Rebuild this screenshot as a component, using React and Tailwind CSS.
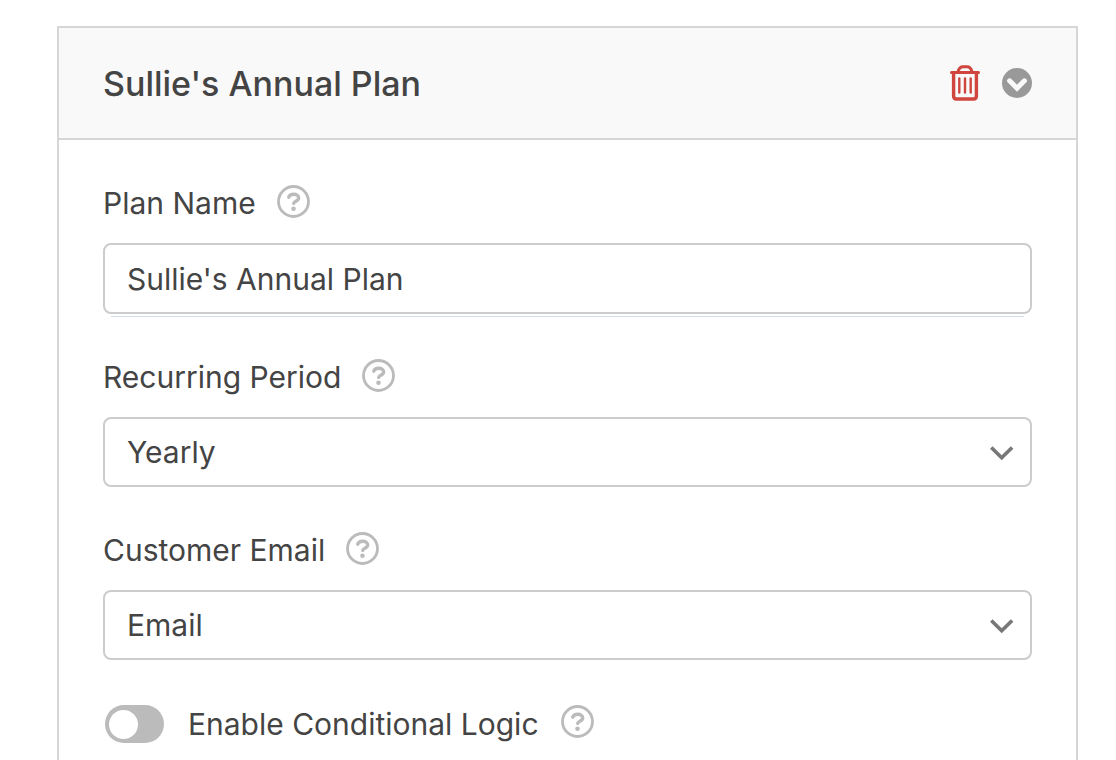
import React, { useState } from 'react';

const HelpTip = ({ label }) => (
  <button type="button" aria-label={`Help: ${label}`} className="shrink-0 text-[#bbbbbb]">
    <svg width="34" height="34" viewBox="0 0 34 34" fill="none" stroke="currentColor" strokeLinecap="round" strokeLinejoin="round">
      <circle cx="16.5" cy="16.5" r="15" strokeWidth="2.8" />
      <path d="M11.7 12.2C12.5 10.1 14.3 9.3 16.7 9.3C19.6 9.3 21.7 10.7 21.7 13C21.7 16.2 16.7 16 16.7 18.4" strokeWidth="3.4" />
      <circle cx="16.5" cy="23.8" r="2.3" fill="currentColor" stroke="none" />
    </svg>
  </button>
);

const Field = ({ id, label, children }) => (
  <div>
    <div className="flex items-start gap-[21px] h-9 mb-[22px]">
      <label htmlFor={id} className="leading-9">{label}</label>
      <HelpTip label={label} />
    </div>
    {children}
  </div>
);

const SelectBox = ({ id, value, onChange, options }) => (
  <div className="relative">
    <select
      id={id}
      value={value}
      onChange={(e) => onChange(e.target.value)}
      className="block w-full h-[70px] pl-[22px] pr-14 appearance-none bg-white border-2 border-[#cccccc] rounded-lg outline-none"
    >
      {options.map((option) => (
        <option key={option}>{option}</option>
      ))}
    </select>
    <svg
      className="absolute right-[18px] top-7 pointer-events-none"
      width="24"
      height="16"
      viewBox="0 0 24 16"
      fill="none"
      stroke="#777777"
      strokeWidth="3.6"
    >
      <path d="M1.3 2.4L11.7 12.8L22.1 2.4" />
    </svg>
  </div>
);

const TrashIcon = () => (
  <svg width="30" height="36" viewBox="0 0 30 36" fill="none" stroke="#d0453e" strokeLinecap="round" strokeLinejoin="round">
    <path d="M1.5 7.5H28.5" strokeWidth="3" />
    <path d="M8 6.5C9 3.4 10.6 1.8 12.8 1.8H17.2C19.4 1.8 21 3.4 22 6.5" strokeWidth="3" />
    <path d="M3.6 8V31C3.6 33 4.7 34 6.5 34H23.5C25.3 34 26.4 33 26.4 31V8" strokeWidth="3.4" />
    <path d="M9.3 13.5V27.5M15 13.5V27.5M20.7 13.5V27.5" strokeWidth="2.4" />
  </svg>
);

const CollapseIcon = () => (
  <svg width="30" height="30" viewBox="0 0 30 30" fill="none">
    <circle cx="15" cy="15" r="15" fill="#999999" />
    <path d="M7.6 12.8L15 20.2L22.4 12.8" stroke="#f9f9f9" strokeWidth="5" strokeLinejoin="miter" strokeLinecap="round" />
  </svg>
);

export default function App() {
  const [name, setName] = useState("Sullie's Annual Plan");
  const [period, setPeriod] = useState('Yearly');
  const [email, setEmail] = useState('Email');
  const [conditional, setConditional] = useState(false);

  return (
    <main className="flex flex-col min-h-screen bg-white pt-[26px] pl-[57px] pr-[38px] font-['Inter','Liberation_Sans',sans-serif] text-[30px] text-[#444444]">
      <section className="flex-1 border-2 border-b-0 border-[#d6d6d6]">
        <header className="flex items-center justify-between h-28 px-11 bg-[#f9f9f9] border-b-2 border-[#d6d6d6]">
          <h2 className="text-[34px] font-medium">{name}</h2>
          <div className="flex items-center gap-[22px]">
            <button type="button" aria-label="Delete plan">
              <TrashIcon />
            </button>
            <button type="button" aria-label="Toggle plan">
              <CollapseIcon />
            </button>
          </div>
        </header>

        <div className="px-11 pt-[45px]">
          <div className="flex flex-col gap-[45px]">
            <Field id="plan-name" label="Plan Name">
              <div className="relative">
                <input
                  id="plan-name"
                  type="text"
                  value={name}
                  onChange={(e) => setName(e.target.value)}
                  className="block w-full h-[71px] px-[22px] bg-white border-2 border-[#cccccc] rounded-lg outline-none"
                />
                <span className="absolute inset-x-2 -bottom-[3px] h-px bg-[#cfe0f0]" />
              </div>
            </Field>
            <Field id="period" label="Recurring Period">
              <SelectBox
                id="period"
                value={period}
                onChange={setPeriod}
                options={['Daily', 'Weekly', 'Monthly', 'Quarterly', 'Semi-Yearly', 'Yearly']}
              />
            </Field>
            <Field id="customer-email" label="Customer Email">
              <SelectBox id="customer-email" value={email} onChange={setEmail} options={['Email']} />
            </Field>
          </div>

          <div className="flex items-start mt-[45px] ml-0.5">
            <input
              id="conditional-logic"
              type="checkbox"
              checked={conditional}
              onChange={(e) => setConditional(e.target.checked)}
              className="flex items-center appearance-none w-[59px] h-[38px] px-1 rounded-full bg-[#bbbbbb] checked:justify-end checked:bg-[#d0453e] before:block before:size-[29px] before:rounded-full before:bg-white"
            />
            <label htmlFor="conditional-logic" className="ml-6 mr-[22px] leading-[38px]">
              Enable Conditional Logic
            </label>
            <HelpTip label="Enable Conditional Logic" />
          </div>
        </div>
      </section>
    </main>
  );
}
